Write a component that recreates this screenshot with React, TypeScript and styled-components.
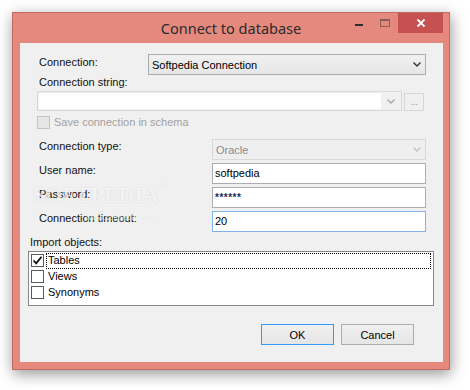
import React from "react";
import styled, { createGlobalStyle } from "styled-components";

const Global = createGlobalStyle`
  html, body { margin: 0; padding: 0; background: #ffffff; }
  body {
    font-family: "Liberation Sans", Arial, sans-serif;
    font-size: 11px;
    color: #000;
  }
  * { box-sizing: border-box; }
`;

const Page = styled.div`
  width: 470px;
  height: 390px;
  padding: 12px 0 0 12px;
  overflow: hidden;
`;

const Window = styled.div`
  width: 438px;
  height: 358px;
  background: #e5897e;
  border: 1px solid #c46a60;
  box-shadow: 1px 4px 14px rgba(0, 0, 0, 0.42);
  display: flex;
  flex-direction: column;
`;

const TitleBar = styled.div`
  height: 30px;
  flex: none;
  display: grid;
  grid-template-columns: 1fr auto 1fr;
  align-items: start;
`;

const Title = styled.div`
  grid-column: 2;
  font-family: "Noto Sans", "Open Sans", sans-serif;
  font-size: 14.5px;
  line-height: 31px;
  color: #2b2b2b;
  white-space: nowrap;
`;

const Controls = styled.div`
  grid-column: 3;
  justify-self: end;
  display: flex;
  margin-right: 6px;
`;

const CaptionButton = styled.div<{ $close?: boolean }>`
  width: ${(p) => (p.$close ? 45 : 26)}px;
  height: 20px;
  display: flex;
  align-items: center;
  justify-content: center;
  background: ${(p) => (p.$close ? "#c75050" : "transparent")};
`;

const Client = styled.div`
  position: relative;
  flex: 1;
  margin: 0 6px 7px 7px;
  background: #f0f0f0;
  padding-top: 11px;
  display: flex;
  flex-direction: column;
`;

const FieldRow = styled.div<{ $top: number; $labelWidth: number }>`
  display: grid;
  grid-template-columns: ${(p) => p.$labelWidth}px auto;
  align-items: start;
  margin-top: ${(p) => p.$top}px;
  padding-left: 17px;
`;

const Label = styled.div<{ $pt?: number }>`
  padding: ${(p) => p.$pt ?? 1}px 0 0 2px;
  line-height: 13px;
  color: #111;
  white-space: nowrap;
`;

const StandaloneLabel = styled.div<{ $top: number; $left: number }>`
  margin-top: ${(p) => p.$top}px;
  padding-left: ${(p) => p.$left}px;
  line-height: 13px;
  color: #111;
`;

const Combo = styled.div<{ $width: number; $disabled?: boolean }>`
  width: ${(p) => p.$width}px;
  height: 21px;
  display: flex;
  align-items: center;
  padding-left: 3px;
  border: 1px solid ${(p) => (p.$disabled ? "#d9d9d9" : "#acacac")};
  background: ${(p) =>
    p.$disabled ? "#efefef" : "linear-gradient(#f1f1f1, #e6e6e6)"};
  color: ${(p) => (p.$disabled ? "#8a8a8a" : "#000")};
`;

const ComboText = styled.div`
  flex: 1;
  white-space: nowrap;
`;

const ChevronBox = styled.div<{ $width: number }>`
  width: ${(p) => p.$width}px;
  align-self: stretch;
  display: flex;
  align-items: center;
  justify-content: center;
`;

const EditRow = styled.div`
  display: flex;
  align-items: flex-start;
  margin-top: 2px;
  padding-left: 17px;
`;

const EditCombo = styled.div`
  width: 365px;
  height: 20px;
  display: flex;
  padding: 1px;
  border: 1px solid #d9d9d9;
  background: #f0f0f0;
`;

const EditField = styled.div`
  flex: 1;
  background: #ffffff;
`;

const DotsButton = styled.div`
  width: 20px;
  height: 18px;
  margin: 2px 0 0 2px;
  border: 1px solid #d5d5d5;
  background: #f0f0f0;
  color: #a0a0a0;
  font-size: 10px;
  line-height: 16px;
  text-align: center;
  letter-spacing: -0.5px;
`;

const CheckRow = styled.div`
  display: flex;
  align-items: flex-start;
  margin-top: 5px;
  padding-left: 17px;
`;

const Box = styled.div<{ $disabled?: boolean }>`
  width: 13px;
  height: 13px;
  flex: none;
  border: 1px solid ${(p) => (p.$disabled ? "#c4c4c4" : "#5b5b5b")};
  background: ${(p) => (p.$disabled ? "#e6e6e6" : "#ffffff")};
  display: flex;
  align-items: center;
  justify-content: center;
`;

const CheckText = styled.div<{ $disabled?: boolean }>`
  margin-left: 4px;
  line-height: 13px;
  color: ${(p) => (p.$disabled ? "#a2a2a2" : "#000")};
`;

const TextBox = styled.div<{ $focused?: boolean; $password?: boolean }>`
  width: 214px;
  height: 21px;
  padding-left: 2px;
  border: 1px solid ${(p) => (p.$focused ? "#7eb4ea" : "#abadb3")};
  background: #ffffff;
  line-height: 19px;
  color: ${(p) => (p.$password ? "#1b2c5c" : "#000")};
  letter-spacing: ${(p) => (p.$password ? "0.5px" : "0")};
  font-weight: ${(p) => (p.$password ? "bold" : "normal")};
  font-size: ${(p) => (p.$password ? "10px" : "11px")};
`;

const List = styled.div`
  margin: 2px 0 0 8px;
  width: 406px;
  height: 55px;
  border: 1px solid #828790;
  background: #ffffff;
  padding: 1px 0 0 2px;
`;

const ListRow = styled.div`
  height: 16px;
  display: flex;
  align-items: flex-start;
  padding-top: 1px;
`;

const ListLabel = styled.div<{ $focused?: boolean }>`
  flex: 1;
  height: 16px;
  margin: -1px 2px 0 2px;
  padding-left: 1px;
  border: 1px dotted ${(p) => (p.$focused ? "#000" : "transparent")};
  line-height: 13px;
  color: #000;
`;

const ButtonBar = styled.div`
  display: flex;
  justify-content: flex-end;
  gap: 7px;
  margin-top: 18px;
  padding-right: 29px;
`;

const Button = styled.div<{ $default?: boolean }>`
  width: 73px;
  height: 21px;
  border: 1px solid ${(p) => (p.$default ? "#3399ff" : "#adadad")};
  background: linear-gradient(#f0f0f0, #e5e5e5);
  display: flex;
  align-items: center;
  justify-content: center;
  color: #000;
`;

const Watermark = styled.div`
  position: absolute;
  left: 13px;
  top: 139px;
  font-family: "Liberation Serif", serif;
  font-weight: bold;
  font-size: 22px;
  color: rgba(255, 255, 255, 0.7);
  text-shadow: 0 0 2px rgba(0, 0, 0, 0.12);
  pointer-events: none;
  white-space: nowrap;
`;

const Tm = styled.span`
  font-family: "Liberation Sans", sans-serif;
  font-size: 7px;
  vertical-align: top;
  margin-left: 2px;
`;

const WatermarkUrl = styled.div`
  position: absolute;
  left: 66px;
  top: 170px;
  font-size: 8px;
  color: rgba(255, 255, 255, 0.7);
  text-shadow: 0 0 1px rgba(0, 0, 0, 0.1);
  pointer-events: none;
`;

const Chevron: React.FC<{ color: string }> = ({ color }) => (
  <svg width="8" height="5" viewBox="0 0 8 5">
    <polyline points="0.5,0.5 4,4 7.5,0.5" fill="none" stroke={color} strokeWidth="1.4" />
  </svg>
);

const CheckMark = () => (
  <svg width="11" height="11" viewBox="0 0 11 11">
    <polyline points="1.5,5.5 4.2,8.3 9.5,1.8" fill="none" stroke="#111" strokeWidth="1.8" />
  </svg>
);

export default function App() {
  return (
    <Page>
      <Global />
      <Window>
        <TitleBar>
          <Title>Connect to database</Title>
          <Controls>
            <CaptionButton>
              <svg width="10" height="10" viewBox="0 0 10 10">
                <rect x="1" y="6" width="8" height="2" fill="#2d2d2d" />
              </svg>
            </CaptionButton>
            <CaptionButton>
              <svg width="10" height="8" viewBox="0 0 10 8">
                <rect x="0.5" y="0.5" width="9" height="7" fill="none" stroke="#8a5d57" strokeWidth="1" />
                <rect x="0.5" y="0.5" width="9" height="1.5" fill="#8a5d57" />
              </svg>
            </CaptionButton>
            <CaptionButton $close>
              <svg width="10" height="10" viewBox="0 0 10 10">
                <path d="M1.5 1.5 L8.5 8.5 M8.5 1.5 L1.5 8.5" stroke="#ffffff" strokeWidth="1.8" />
              </svg>
            </CaptionButton>
          </Controls>
        </TitleBar>
        <Client>
          <FieldRow $top={0} $labelWidth={111}>
            <Label $pt={2}>Connection:</Label>
            <Combo $width={278}>
              <ComboText>Softpedia Connection</ComboText>
              <ChevronBox $width={17}>
                <Chevron color="#333" />
              </ChevronBox>
            </Combo>
          </FieldRow>
          <StandaloneLabel $top={1} $left={19}>
            Connection string:
          </StandaloneLabel>
          <EditRow>
            <EditCombo>
              <EditField />
              <ChevronBox $width={19}>
                <Chevron color="#a8a8a8" />
              </ChevronBox>
            </EditCombo>
            <DotsButton>...</DotsButton>
          </EditRow>
          <CheckRow>
            <Box $disabled />
            <CheckText $disabled>Save connection in schema</CheckText>
          </CheckRow>
          <FieldRow $top={10} $labelWidth={175}>
            <Label>Connection type:</Label>
            <Combo $width={214} $disabled>
              <ComboText>Oracle</ComboText>
              <ChevronBox $width={17}>
                <Chevron color="#c2c2c2" />
              </ChevronBox>
            </Combo>
          </FieldRow>
          <FieldRow $top={3} $labelWidth={175}>
            <Label>User name:</Label>
            <TextBox>softpedia</TextBox>
          </FieldRow>
          <FieldRow $top={3} $labelWidth={175}>
            <Label>Password:</Label>
            <TextBox $password>******</TextBox>
          </FieldRow>
          <FieldRow $top={3} $labelWidth={175}>
            <Label>Connection timeout:</Label>
            <TextBox $focused>20</TextBox>
          </FieldRow>
          <StandaloneLabel $top={4} $left={10}>
            Import objects:
          </StandaloneLabel>
          <List>
            <ListRow>
              <Box>
                <CheckMark />
              </Box>
              <ListLabel $focused>Tables</ListLabel>
            </ListRow>
            <ListRow>
              <Box />
              <ListLabel>Views</ListLabel>
            </ListRow>
            <ListRow>
              <Box />
              <ListLabel>Synonyms</ListLabel>
            </ListRow>
          </List>
          <ButtonBar>
            <Button $default>OK</Button>
            <Button>Cancel</Button>
          </ButtonBar>
          <Watermark>
            SOFTPEDIA<Tm>™</Tm>
          </Watermark>
          <WatermarkUrl>www.softpedia.com</WatermarkUrl>
        </Client>
      </Window>
    </Page>
  );
}
